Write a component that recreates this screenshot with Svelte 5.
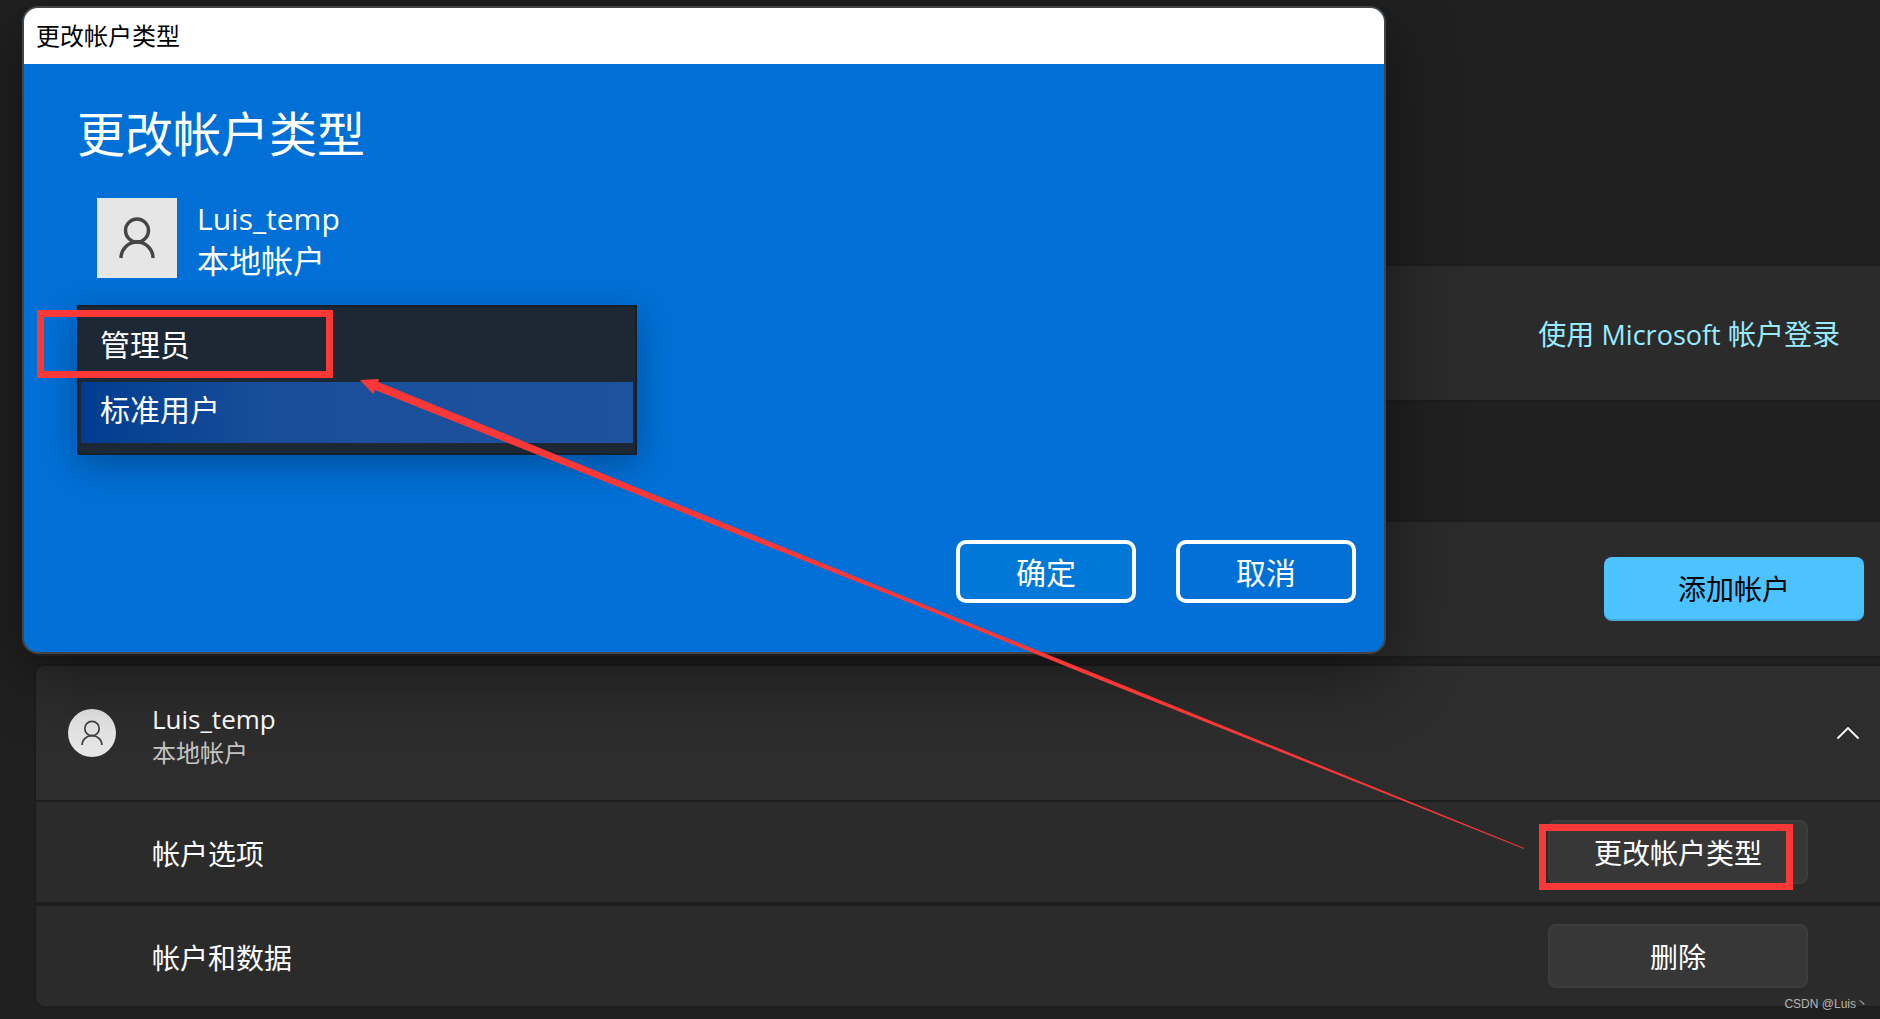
<script lang="ts">
  let accountType = $state('standard');
</script>

{#snippet person(thin: boolean)}
  <svg class="person" viewBox="0 0 80 80" aria-hidden="true">
    {#if thin}
      <g fill="none" stroke="#404040" stroke-width="2.800">
        <circle cx="40" cy="32.500" r="12" />
        <path d="M23.500 60a16.500 15.500 0 0 1 33 0" />
      </g>
    {:else}
      <g fill="none" stroke="#454545" stroke-width="3.400">
        <circle cx="40" cy="32.500" r="11.500" />
        <path d="M24 60a16 16 0 0 1 32 0" />
      </g>
    {/if}
  </svg>
{/snippet}

<main class="settings">
  <section class="card signin">
    <a href="#signin">使用 <span class="latin">Microsoft</span> 帐户登录</a>
  </section>
  <section class="card add">
    <button class="accent">添加帐户</button>
  </section>
  <section class="account">
    <header class="card head">
      <span class="avatar round">{@render person(true)}</span>
      <div class="who">
        <strong>Luis_temp</strong>
        <small>本地帐户</small>
      </div>
      <button class="toggle" aria-label="折叠">
        <svg viewBox="0 0 24 14" aria-hidden="true"><path d="M1.500 12.500L12 2l10.500 10.500" fill="none" stroke="#fff" stroke-width="1.800" /></svg>
      </button>
    </header>
    <div class="card option">
      <span>帐户选项</span>
      <button class="plain">更改帐户类型</button>
    </div>
    <div class="card option last">
      <span>帐户和数据</span>
      <button class="plain">删除</button>
    </div>
  </section>
</main>

<div class="dialog" role="dialog" aria-labelledby="dialog-title">
  <div class="titlebar">更改帐户类型</div>
  <div class="body">
    <h1 id="dialog-title">更改帐户类型</h1>
    <div class="profile">
      <span class="avatar square">{@render person(false)}</span>
      <div class="who">
        <strong>Luis_temp</strong>
        <small>本地帐户</small>
      </div>
    </div>
    <select class="types" size="2" bind:value={accountType} aria-label="帐户类型">
      <option value="admin">管理员</option>
      <option value="standard">标准用户</option>
    </select>
    <div class="actions">
      <button class="ok">确定</button>
      <button>取消</button>
    </div>
  </div>
</div>

<div class="mark mark-type"></div>
<div class="mark mark-button"></div>
<svg class="arrow" viewBox="0 0 1880 1019" aria-hidden="true">
  <path fill="#fb3838" d="M360 380L379 379L378 382L930 607L1108 679L1524 848L1524 849L1100 680L930 611L375 390L373 394Z" />
</svg>
<div class="watermark">CSDN @Luis丶</div>

<style>
  :global(body) {
    margin: 0;
    background: #202020;
    color: #fff;
    font-family: "Open Sans", "Noto Sans CJK SC", sans-serif;
    font-size: 28px;
    overflow: hidden;
  }
  button, select {
    font: inherit;
    color: inherit;
    box-sizing: border-box;
  }
  button {
    padding: 0;
    border: 0;
  }
  .settings {
    padding: 264px 0 11px 34px;
  }
  .card {
    display: flex;
    align-items: center;
    box-sizing: border-box;
    background: #2b2b2b;
    background-clip: padding-box;
    border: 2px solid #1d1d1d;
    border-right: 0;
  }
  .signin, .add, .head {
    height: 138px;
  }
  .signin, .add {
    justify-content: flex-end;
  }
  .signin {
    padding-top: 2px;
    padding-right: 40px;
    margin-bottom: 118px;
  }
  .signin a {
    color: #99ebff;
    text-decoration: none;
    line-height: 40px;
  }
  .latin {
    font-size: 27px;
  }
  .add {
    padding-right: 16px;
    margin-bottom: 6px;
  }
  .accent, .plain {
    width: 260px;
    height: 64px;
    border-radius: 8px;
  }
  .accent {
    background: #4cc2ff;
    color: #000;
    border-bottom: 2px solid #42a7dc;
  }
  .plain {
    background: #373737;
    border: 2px solid #3d3d3d;
  }
  .head {
    padding: 0 20px 0 32px;
    background-color: #2d2d2d;
    border-top-left-radius: 10px;
  }
  .avatar {
    display: block;
    flex: none;
    background: #e6e6e6;
  }
  .person {
    display: block;
    width: 100%;
    height: 100%;
  }
  .round {
    width: 48px;
    height: 48px;
    border-radius: 50%;
  }
  .who {
    display: flex;
    flex-direction: column;
  }
  strong, small {
    font-weight: 400;
  }
  .head .who {
    flex: 1;
    padding-top: 4px;
    padding-left: 36px;
  }
  .head strong {
    font-size: 26px;
    line-height: 36px;
    color: #fff;
  }
  .head small {
    font-size: 24px;
    line-height: 32px;
    color: #c5c5c5;
  }
  .toggle {
    width: 24px;
    background: none;
  }
  .toggle svg {
    display: block;
    width: 24px;
  }
  .option {
    height: 102px;
    padding: 0 72px 0 116px;
    justify-content: space-between;
    border-top: 0;
  }
  .option span {
    padding-top: 2px;
  }
  .last {
    height: 104px;
    border-top: 2px solid #1d1d1d;
    border-bottom-left-radius: 10px;
  }
  .dialog {
    position: absolute;
    top: 6px;
    left: 22px;
    width: calc(100% - 516px);
    box-sizing: border-box;
    border: 2px solid #444;
    border-radius: 16px;
    overflow: hidden;
    background: #0070d7;
    box-shadow: 0 20px 72px rgba(0, 0, 0, 0.46);
  }
  .titlebar {
    padding: 0 12px;
    background: #fff;
    color: #000;
    font-size: 24px;
    line-height: 56px;
  }
  .body {
    padding: 34px 28px 49px 53px;
  }
  h1 {
    margin: 0 0 28px;
    font-size: 48px;
    font-weight: 400;
    line-height: 72px;
  }
  .profile {
    display: flex;
    gap: 20px;
    padding-left: 20px;
  }
  .square {
    width: 80px;
    height: 80px;
  }
  .profile strong {
    font-size: 30px;
    line-height: 42px;
  }
  .profile small {
    font-size: 32px;
    line-height: 42px;
  }
  .types {
    display: block;
    width: 560px;
    height: 150px;
    margin-top: 23px;
    padding: 10px 2px 0;
    border: 2px solid #14202b;
    border-radius: 0;
    outline: 0;
    overflow: hidden;
    background: #1c2833;
    font-size: 30px;
    box-shadow: 0 10px 36px rgba(0, 0, 0, 0.3);
  }
  .types option {
    height: 61px;
    min-height: 0;
    margin-bottom: 4px;
    padding: 4px 19px 0;
    box-sizing: border-box;
    line-height: 58px;
    color: #fff;
  }
  .types option:checked {
    background: linear-gradient(90deg, #003c90, #194f9a 35%, #1c529e);
    color: #fff;
  }
  .actions {
    display: flex;
    justify-content: flex-end;
    gap: 40px;
    margin-top: 85px;
  }
  .actions button {
    width: 180px;
    height: 63px;
    padding-bottom: 2px;
    border: 4px solid #fff;
    border-radius: 10px;
    background: #0070d7;
    font-size: 30px;
  }
  .actions .ok {
    background: #0078d7;
  }
  .mark {
    position: absolute;
    box-sizing: border-box;
    border: 7px solid #fb3838;
    pointer-events: none;
  }
  .mark-type {
    left: 37px;
    top: 310px;
    width: 296px;
    height: 68px;
  }
  .mark-button {
    right: 87px;
    top: 824px;
    width: 254px;
    height: 66px;
  }
  .arrow {
    position: absolute;
    top: 0;
    left: 0;
    width: 100%;
    pointer-events: none;
  }
  .watermark {
    position: absolute;
    right: 12px;
    top: 996px;
    font-family: "Liberation Sans", "Noto Sans CJK SC", sans-serif;
    font-size: 12px;
    line-height: 16px;
    color: #b5b5b5;
  }
</style>
